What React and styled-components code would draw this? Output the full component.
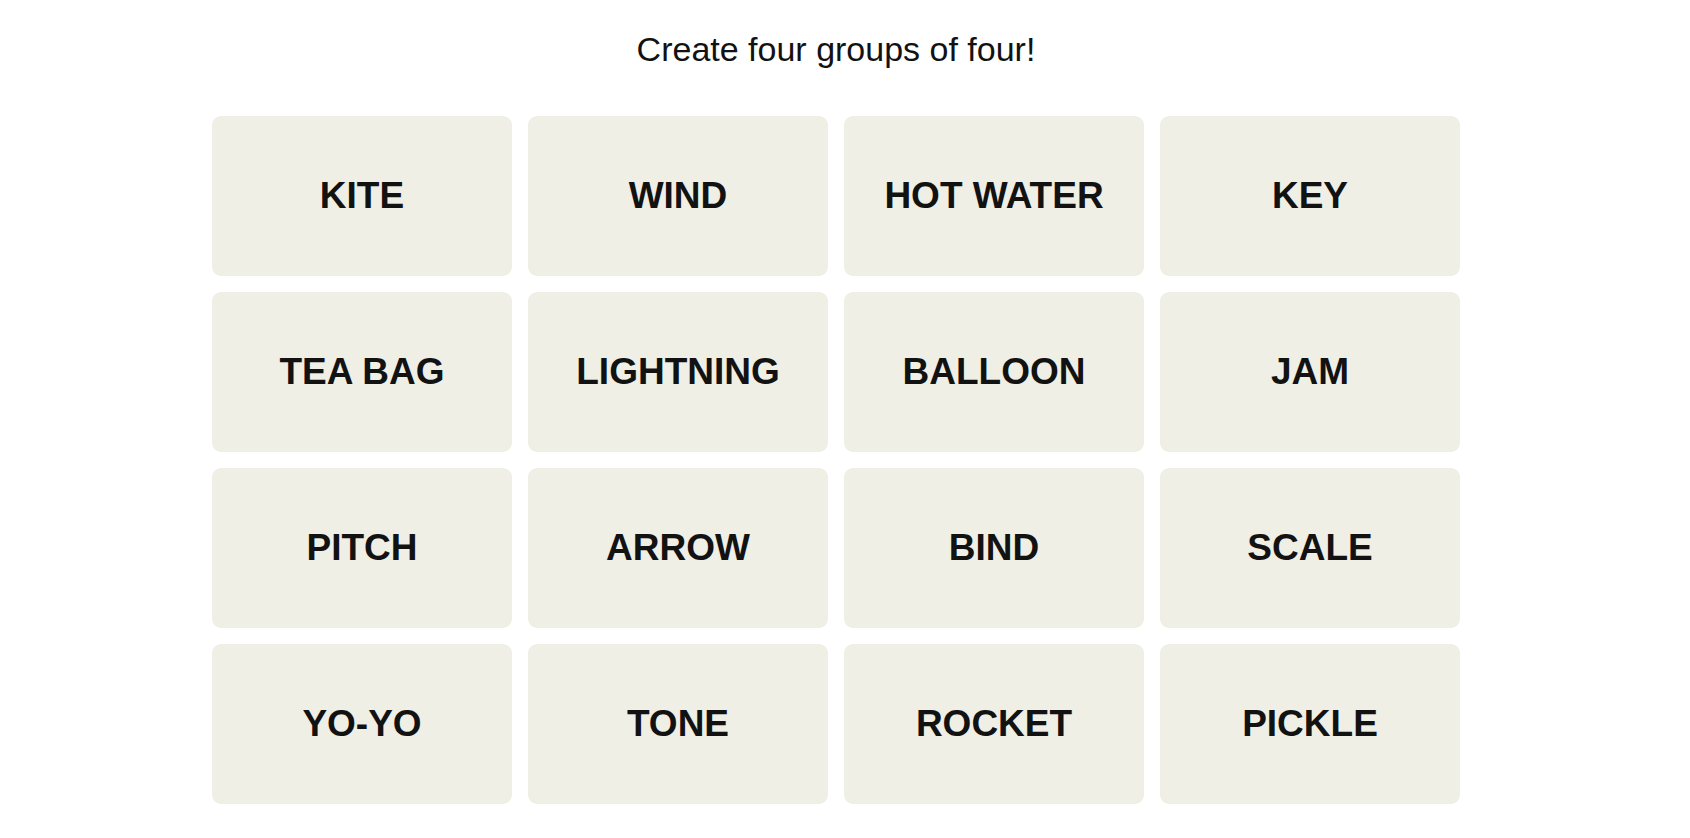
import React from 'react';
import styled, { createGlobalStyle } from 'styled-components';

const GlobalStyle = createGlobalStyle`
  body {
    margin: 0;
    background: #ffffff;
    font-family: 'Liberation Sans', Arial, sans-serif;
    color: #121212;
  }
`;

const Page = styled.main`
  display: flex;
  flex-direction: column;
  align-items: center;
  padding: 29px 18px 0 0;
`;

const Title = styled.h1`
  margin: 0 0 46px;
  font-size: 34px;
  line-height: 41px;
  font-weight: 400;
  color: #121212;
`;

const Board = styled.div`
  display: grid;
  grid-template-columns: repeat(4, 300px);
  grid-auto-rows: 160px;
  gap: 16px;
`;

const Tile = styled.button`
  display: flex;
  align-items: center;
  justify-content: center;
  border: none;
  border-radius: 9px;
  background: #efefe6;
  color: #121212;
  font-family: 'Liberation Sans', Arial, sans-serif;
  font-size: 37px;
  font-weight: 700;
  text-transform: uppercase;
  cursor: pointer;
  padding: 0;
`;

const words = [
  'KITE', 'WIND', 'HOT WATER', 'KEY',
  'TEA BAG', 'LIGHTNING', 'BALLOON', 'JAM',
  'PITCH', 'ARROW', 'BIND', 'SCALE',
  'YO-YO', 'TONE', 'ROCKET', 'PICKLE',
];

export default function App() {
  return (
    <>
      <GlobalStyle />
      <Page>
        <Title>Create four groups of four!</Title>
        <Board>
          {words.map((w) => (
            <Tile key={w}>{w}</Tile>
          ))}
        </Board>
      </Page>
    </>
  );
}
